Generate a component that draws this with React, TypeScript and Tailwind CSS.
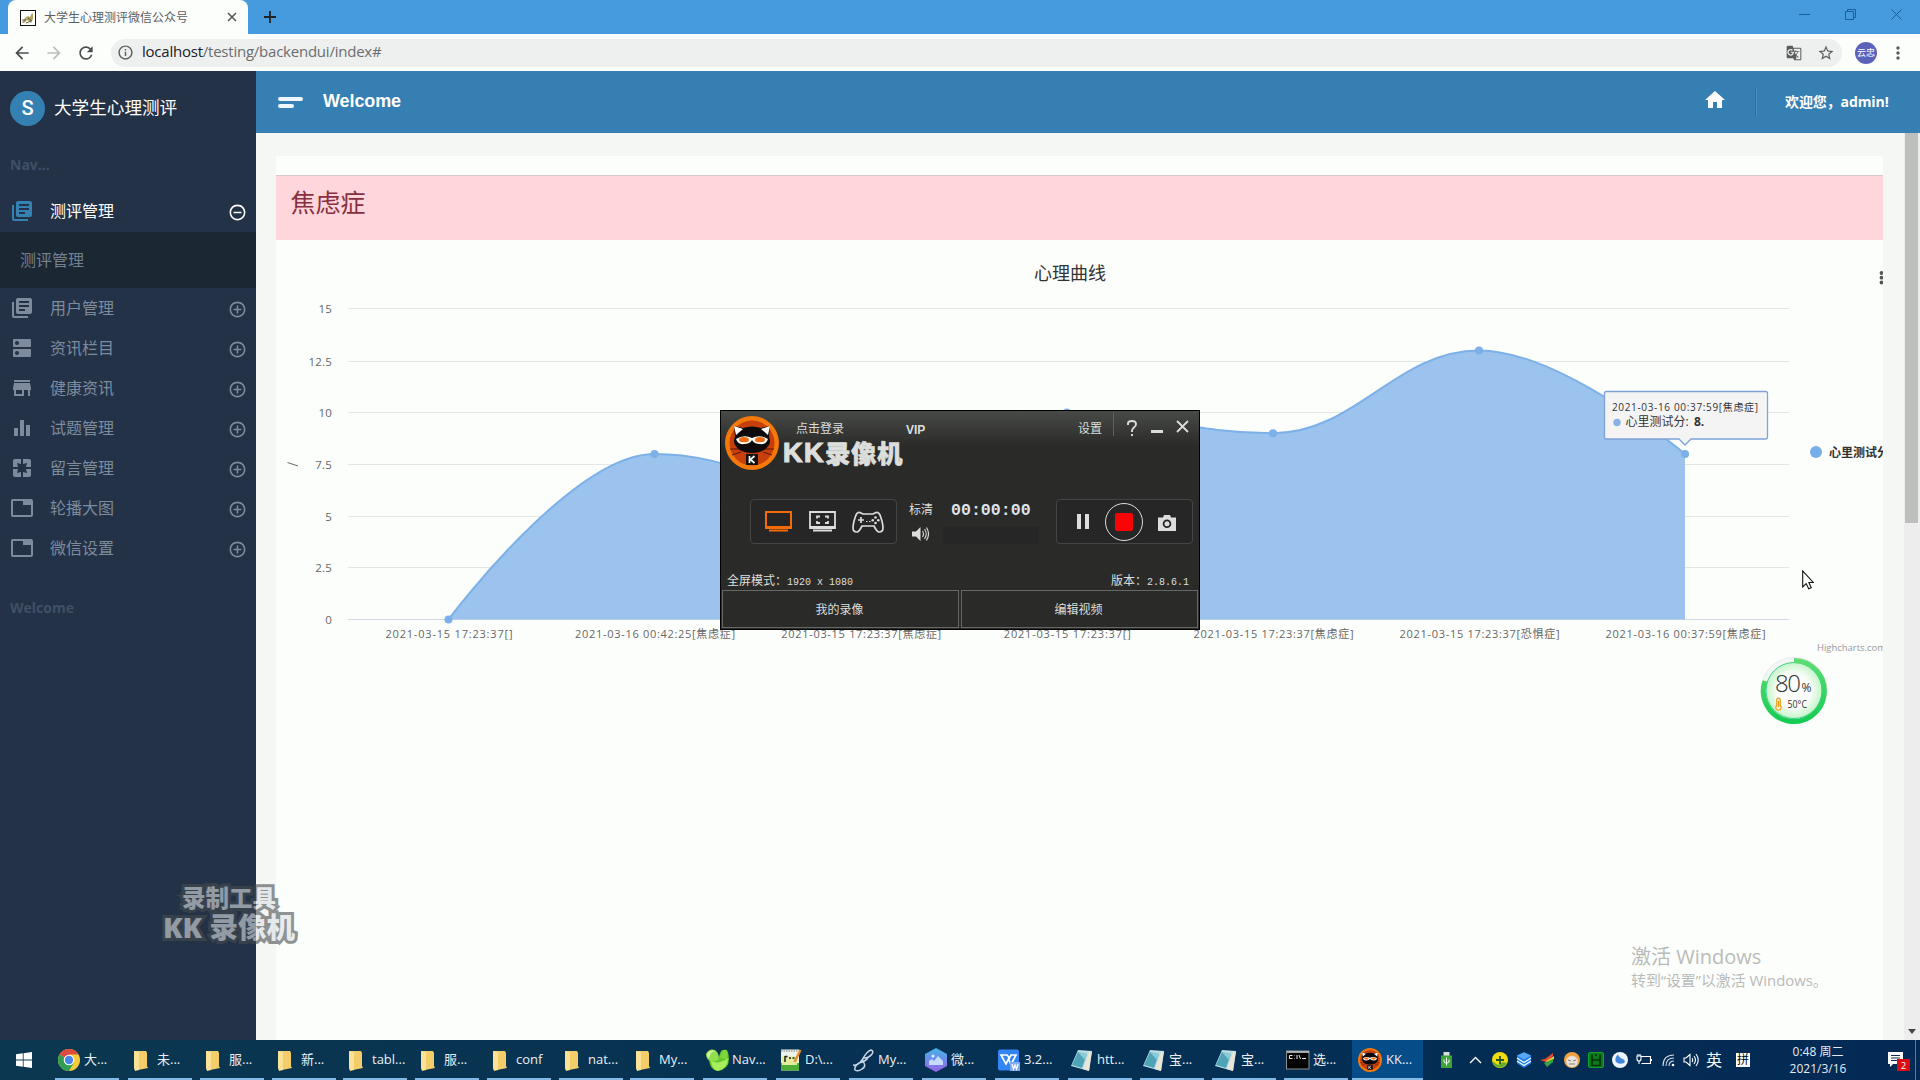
import React from "react";
import {
  MdLibraryBooks, MdDns, MdStore, MdEqualizer, MdPages, MdTab, MdHome,
  MdAddCircleOutline, MdRemoveCircleOutline, MdArrowBack, MdArrowForward,
  MdRefresh, MdInfoOutline, MdStarBorder, MdMoreVert, MdGTranslate,
} from "react-icons/md";

const SANS = "font-['Open_Sans','Noto_Sans_CJK_SC',sans-serif]";

/* ---------- Browser chrome ---------- */

function TabStrip() {
  return (
    <div className="flex h-[34px] shrink-0 items-stretch bg-[#469bdf]">
      <div className="ml-2 flex w-[240px] items-center rounded-t-lg bg-[#fcfefc] pl-3">
        <svg className="mt-px h-4 w-4" viewBox="0 0 16 16">
          <rect x="0.5" y="0.5" width="15" height="15" fill="#fff" stroke="#111" />
          <path d="M2 13 5 8 8 6 10 7 12 3 13 4 13 9 11 13 9 11 7 10 4 13z" fill="#b5a45a" />
          <path d="M2 10h4M8 8l4 3M6 13l5-2" stroke="#555" fill="none" />
        </svg>
        <span className="ml-2 mt-0.5 w-[183px] text-xs text-[#5c6065]">大学生心理测评微信公众号</span>
        <svg className="h-2.5 w-2.5" viewBox="0 0 10 10"><path d="M1 1l8 8M9 1l-8 8" stroke="#555" strokeWidth="1.6" /></svg>
      </div>
      <svg className="ml-4 mt-[11px] h-3 w-3" viewBox="0 0 12 12"><path d="M6 0v12M0 6h12" stroke="#222" strokeWidth="1.8" /></svg>
      <div className="ml-auto mr-[18px] flex items-start gap-[35px] pt-[9px] text-[#17609d]">
        <svg className="h-[11px] w-[11px]" viewBox="0 0 11 11"><path d="M0 5.5h11" stroke="currentColor" /></svg>
        <svg className="h-[11px] w-[11px]" viewBox="0 0 11 11"><path d="M.5 2.500h8v8h-8zM2.500 2.500v-2h8v8h-2" fill="none" stroke="currentColor" /></svg>
        <svg className="h-[11px] w-[11px]" viewBox="0 0 11 11"><path d="M.5.5l10 10M10.500.5l-10 10" stroke="currentColor" /></svg>
      </div>
    </div>
  );
}

function AddressBar() {
  return (
    <div className="flex h-[37px] shrink-0 items-center bg-[#fcfefc] pl-3 text-[#5a5c5e]">
      <MdArrowBack className="h-5 w-5 shrink-0 text-[#4a4c4e]" />
      <MdArrowForward className="ml-3 h-5 w-5 shrink-0 text-[#bcbebe]" />
      <MdRefresh className="ml-3 h-5 w-5 shrink-0 text-[#4a4c4e]" />
      <div className="ml-[15px] flex h-7 grow items-center rounded-full bg-[#eef0ef] pl-[6px] text-[15px]">
        <MdInfoOutline className="h-[17px] w-[17px]" />
        <span className="-mt-0.5 ml-2 tracking-[-0.23px] text-[#6b6d6f]"><span className="text-[#202124]">localhost</span>/testing/backendui/index#</span>
        <MdGTranslate className="ml-auto h-4 w-4" />
        <MdStarBorder className="ml-[15px] mr-[7px] h-[18px] w-[18px]" />
      </div>
      <div className="ml-[13px] flex h-[22px] w-[22px] shrink-0 items-center justify-center rounded-full bg-[#5c62b8] text-[9px] text-white">云忠</div>
      <MdMoreVert className="ml-[11px] mr-[12px] h-[20px] w-[20px] shrink-0" />
    </div>
  );
}

/* ---------- Sidebar ---------- */

const MENU = [
  { icon: MdLibraryBooks, label: "用户管理" },
  { icon: MdDns, label: "资讯栏目" },
  { icon: MdStore, label: "健康资讯" },
  { icon: MdEqualizer, label: "试题管理" },
  { icon: MdPages, label: "留言管理" },
  { icon: MdTab, label: "轮播大图" },
  { icon: MdTab, label: "微信设置" },
];

function Sidebar() {
  return (
    <aside className="flex w-64 shrink-0 flex-col bg-[#233247] text-base leading-none text-[#7d8b9d]">
      <div className="flex h-[76px] items-center pb-[2px] pl-[10px]">
        <div className="flex h-[35px] w-[35px] items-center justify-center rounded-full bg-[#3580b3] font-['Roboto',sans-serif] text-[20px] font-medium text-white">S</div>
        <span className="ml-[9px] text-[17.6px] text-white">大学生心理测评</span>
      </div>
      <div className="flex h-[45px] items-center pb-[10px] pl-[10px] text-sm font-bold text-[#405066]">Nav...</div>
      <div className="flex h-10 items-center pb-[2px] pl-[10px] pr-[9px] text-white">
        <MdLibraryBooks className="h-6 w-6 text-[#3681b4]" />
        <span className="ml-4">测评管理</span>
        <MdRemoveCircleOutline className="ml-auto mt-0.5 h-[19px] w-[19px]" />
      </div>
      <div className="flex h-14 items-center bg-[#1b2733] pb-px pl-5 text-[#728090]">测评管理</div>
      <div>
        {MENU.map((m) => (
          <div key={m.label} className="flex h-10 items-center pl-[10px] pr-[9px]">
            <m.icon className="h-6 w-6" />
            <span className="ml-4">{m.label}</span>
            <MdAddCircleOutline className="ml-auto mt-[3px] h-[19px] w-[19px]" />
          </div>
        ))}
      </div>
      <div className="flex h-20 items-center pl-[10px] text-sm font-bold text-[#405066]">Welcome</div>
    </aside>
  );
}

/* ---------- Chart ---------- */

const XS = [448.5, 654.5, 860.7, 1066.800, 1273, 1479, 1685];
const VALUES = [0, 8, 6, 10, 9, 13, 8];
const BASE = 619.5;
const UNIT = 20.700;
const py = (v: number) => BASE - v * UNIT;

/* Every inner point is a local extremum, so its handles are horizontal. */
function splinePath() {
  let d = `M ${XS[0]} ${py(VALUES[0])}`;
  for (let i = 0; i < XS.length - 1; i++) {
    const dx = XS[i + 1] - XS[i];
    const last = i + 1 === XS.length - 1;
    const c1x = i === 0 ? XS[0] : XS[i] + 0.4 * dx;
    const c2x = last ? XS[i + 1] : XS[i + 1] - 0.4 * dx;
    d += ` C ${c1x} ${py(VALUES[i])} ${c2x} ${py(VALUES[i + 1])} ${XS[i + 1]} ${py(VALUES[i + 1])}`;
  }
  return d;
}

const TICKS = [
  { y: 308.5, t: "15" }, { y: 361.5, t: "12.5" }, { y: 412.5, t: "10" }, { y: 464.5, t: "7.5" },
  { y: 516.5, t: "5" }, { y: 567.5, t: "2.5" }, { y: 619.5, t: "0" },
];
const CATS = [
  { t: "2021-03-15 17:23:37[]", w: 127 },
  { t: "2021-03-16 00:42:25[焦虑症]", w: 160 },
  { t: "2021-03-15 17:23:37[焦虑症]", w: 160 },
  { t: "2021-03-15 17:23:37[]", w: 127 },
  { t: "2021-03-15 17:23:37[焦虑症]", w: 160 },
  { t: "2021-03-15 17:23:37[恐惧症]", w: 160 },
  { t: "2021-03-16 00:37:59[焦虑症]", w: 160 },
];

function Chart() {
  const line = splinePath();
  return (
    <svg width="1607" height="440" viewBox="276 240 1607 440" className="block">
      <text x="1070" y="279.500" textAnchor="middle" fontSize="18" fill="#333">心理曲线</text>
      {TICKS.map((k) => (
        <g key={k.t}>
          <path d={`M348 ${k.y}H1789`} stroke={k.t === "0" ? "#d3dae4" : "#e4e6e5"} />
          <text x="332" y={k.y + 4} textAnchor="end" fontSize="11.500" letterSpacing="0.2" fill="#666">{k.t}</text>
        </g>
      ))}
      <path d="M287.500 462.500 298 466" stroke="#666" />
      <path d={`${line} L 1685 ${BASE} L ${XS[0]} ${BASE} Z`} fill="#9bc3ee" />
      <path d={line} fill="none" stroke="#7cb0e8" strokeWidth="2" />
      {XS.map((x, i) => <circle key={x} cx={x} cy={py(VALUES[i])} r="4" fill="#7cb0e8" />)}
      {CATS.map((c, i) => (
        <text key={i} x={XS[i] + 0.500 - c.w / 2} y="638" fontSize="11" textLength={c.w} fill="#666">{c.t}</text>
      ))}
      <path d="M1606.500 391.500H1765.500q2 0 2 2V437q0 2-2 2H1691l-6 6-6-6H1606.500q-2 0-2-2V393.500q0-2 2-2z" fill="#f5f4f5" stroke="#7fa3d6" strokeWidth="1.300" />
      <text x="1612" y="411" fontSize="10" textLength="146" fill="#333">2021-03-16 00:37:59[焦虑症]</text>
      <circle cx="1617" cy="422.500" r="3.700" fill="#8ab0e2" />
      <text x="1625.500" y="426" fontSize="12" fill="#333">心里测试分:</text>
      <text x="1694" y="426" fontSize="12" fill="#333" fontWeight="700">8.</text>
      <circle cx="1816" cy="452" r="6" fill="#77aee7" />
      <text x="1829" y="457" fontSize="12" fontWeight="700" fill="#333">心里测试分</text>
      <text x="1817" y="650.500" fontSize="9.500" textLength="69" fill="#999">Highcharts.com</text>
      {[273, 277.700, 282.500].map((y) => <circle key={y} cx="1881.500" cy={y} r="1.900" fill="#555" />)}
    </svg>
  );
}

function Main() {
  return (
    <div className="flex min-w-0 grow flex-col">
      <header className="flex h-[62px] shrink-0 items-center bg-[#357fb2] text-white">
        <div className="ml-[22px] flex w-[25px] flex-col gap-[3px]">
          <div className="h-1 w-[25px] rounded-sm bg-[#eef7ff]" />
          <div className="h-1 w-4 rounded-sm bg-[#eef7ff]" />
        </div>
        <h1 className="-mt-0.5 ml-[20px] font-['Liberation_Sans',sans-serif] text-lg font-bold tracking-[-0.1px]">Welcome</h1>
        <MdHome className="-mt-1 ml-auto h-6 w-6" />
        <div className="ml-[28px] h-7 w-px bg-[#2a6da0]" />
        <div className="h-7 w-px bg-[#4a92c5]" />
        <div className="ml-7 w-[135px] whitespace-nowrap text-sm font-bold tracking-[-0.1px]">欢迎您，admin!</div>
      </header>
      <div className="flex min-h-0 grow bg-[#f5f7f5]">
        <main className="ml-5 mt-[23px] w-[1607px] shrink-0 bg-[#fcfefc]">
          <div className="h-[19px]" />
          <div className="flex h-[65px] items-start border-t border-[#d9c9cf] bg-[#ffd6dc] pl-[14.5px] pt-2 text-[25px] leading-[36px] text-[#87303f]">焦虑症</div>
          <Chart />
        </main>
        <div className="ml-auto flex w-4 shrink-0 flex-col bg-[#ecedec]">
          <div className="ml-px h-[390px] w-[13px] bg-[#bdbfbd]" />
          <svg className="mb-[6px] ml-1 mt-auto h-[5px] w-2" viewBox="0 0 8 5"><path d="M0 0h8L4 5z" fill="#444" /></svg>
        </div>
      </div>
    </div>
  );
}

/* ---------- Recorder window ---------- */

function CatLogo({ className }: { className: string }) {
  return (
    <svg className={className} viewBox="0 0 54 54">
      <circle cx="27" cy="27" r="27" fill="#f5780a" />
      <circle cx="27" cy="27" r="22.500" fill="#c63f0c" />
      <path d="M5 33h10M7 39l9-3M49 33H39M47 39l-9-3" stroke="#5a1a05" />
      <path d="M9 10l9 2q9-3 18 0l9-2-1 11q2 4 0 8-5 8-17 8T10 29q-2-4 0-8z" fill="#0c0a0a" />
      <path d="M9 10l9 3-7 6zM45 10l-9 3 7 6z" fill="#fff" />
      <path d="M11 23q8-5 16-1 8-4 16 1-2 6-8 5-6 0-8-4-2 4-8 4-6 1-8-5z" fill="#fff" />
      <ellipse cx="19" cy="23.700" rx="5" ry="2.600" fill="#f06a10" />
      <ellipse cx="35" cy="23.700" rx="5" ry="2.600" fill="#f06a10" />
      <path d="M21 38h12v11H21z" fill="#111" />
      <path d="M24.500 40v7M29.500 40l-4 3.500 4 3.500" stroke="#fff" strokeWidth="1.700" fill="none" />
    </svg>
  );
}

function Recorder() {
  return (
    <div className="absolute left-[720px] top-[410px] flex h-[220px] w-[480px] flex-col border border-black bg-[#2a2b29] bg-linear-to-b from-[#484a48] from-0% to-[#2a2b29] to-[36px] text-xs leading-none text-[#dcdedc]">
      <div className="flex h-[88px] pl-1 pt-[5px]">
        <CatLogo className="h-[54px] w-[54px]" />
        <div className="ml-[4px] flex w-[160px] flex-col">
          <div className="flex pl-[13px] pt-[7px]">
            <span>点击登录</span>
            <span className="ml-[62px] mt-px font-['Liberation_Sans',sans-serif] font-bold">VIP</span>
          </div>
          <div className="mt-[4px] flex items-center whitespace-nowrap text-[25.500px] font-black leading-[26px]">
            <span className="font-['Liberation_Sans',sans-serif] text-[27px] tracking-[1.5px] [-webkit-text-stroke:1.2px_#dcdedc]">KK</span>
            <span className="tracking-[0.5px] [-webkit-text-stroke:0.6px_#dcdedc]">录像机</span>
          </div>
        </div>
        <div className="ml-auto flex h-[30px] items-start pr-[10px]">
          <span className="mt-[7px]">设置</span>
          <div className="ml-[11px] -mt-1 h-6 w-px bg-[#5f605f]" />
          <svg className="ml-[13px] mt-1 h-4 w-[10px]" viewBox="0 0 10 16"><path d="M1 5V3.500Q1 1 5 1t4 3q0 2-2 3.500T5 11v1M5 14v2" fill="none" stroke="currentColor" strokeWidth="1.900" /></svg>
          <div className="ml-[14px] mt-[14px] h-[3px] w-3 bg-[#dcdedc]" />
          <svg className="ml-[13px] mt-[4px] h-[13px] w-[13px]" viewBox="0 0 13 13"><path d="M1 1l11 11M12 1L1 12" stroke="currentColor" strokeWidth="1.800" /></svg>
        </div>
      </div>
      <div className="flex h-[45px] pl-[29px] pr-[6px]">
        <div className="flex w-[147px] items-center rounded border border-[#444645] bg-[#252625] pl-[14px]">
          <svg className="h-[21px] w-[27px]" viewBox="0 0 27 21"><path d="M1 1h25v16H1zM4 19.500h19" fill="none" stroke="#f56b08" strokeWidth="2" /><path d="M1 15h25v3H1z" fill="#f56b08" /></svg>
          <svg className="ml-[17px] h-[21px] w-[27px]" viewBox="0 0 27 21"><path d="M1 1h25v16H1zM4 19.500h19M8 7.500V5.500h3M16 5.500h3v2M8 10v2h3M16 12h3v-2" fill="none" stroke="currentColor" strokeWidth="1.800" /><path d="M1 15h25v3H1z" fill="currentColor" /></svg>
          <svg className="ml-4 h-[22px] w-8" viewBox="0 0 32 22"><path d="M9 2q-3-2-5 2Q1 12 1 17q0 4 4 4 2 0 5-6h12q3 6 5 6 4 0 4-4 0-5-3-13-2-4-5-2l-2 1H11zM9 6v6M6 9h6" fill="none" stroke="currentColor" strokeWidth="1.700" /><path d="M14 10.500h1.500M17 10.500h1.500" stroke="currentColor" /><circle cx="23.500" cy="6.500" r="1.300" fill="currentColor" /><circle cx="20.700" cy="9.300" r="1.300" fill="currentColor" /><circle cx="26.300" cy="9.300" r="1.300" fill="currentColor" /><circle cx="23.500" cy="12" r="1.300" fill="currentColor" /></svg>
        </div>
        <div className="ml-[12px] flex w-[24px] flex-col">
          <span className="mt-[5px]">标清</span>
          <svg className="ml-[3px] mt-[11px] h-[14px] w-[17px]" viewBox="0 0 17 14"><path d="M0 4.500h4L8.500 0v14L4 9.500H0z" fill="currentColor" /><path d="M10.500 4q2 3 0 6M12.500 2q3.500 5 0 10M14.500.5q4 6.500 0 13" fill="none" stroke="currentColor" strokeWidth="1.100" /></svg>
        </div>
        <div className="ml-[10px] flex w-[96px] flex-col">
          <span className="ml-2 mt-1 font-['Liberation_Mono',monospace] text-[16.600px] font-bold text-[#dbe4ee]">00:00:00</span>
          <div className="mt-[7px] h-[18px] bg-[#252625]" />
        </div>
        <div className="ml-auto flex w-[137px] items-center rounded border border-[#444645] bg-[#252625] pl-[20px]">
          <div className="flex gap-[4px]"><div className="h-[15px] w-1 bg-[#dcdedc]" /><div className="h-[15px] w-1 bg-[#dcdedc]" /></div>
          <div className="ml-4 flex h-[38px] w-[38px] items-center justify-center rounded-full border-[1.500px] border-[#dcdedc]"><div className="h-[18px] w-[18px] rounded-xs bg-[#fa0505]" /></div>
          <svg className="ml-[15px] mt-0.5 h-4 w-[18px]" viewBox="0 0 18 16"><path d="M6 0h6l1 2.500h5V16H0V2.500h5z" fill="currentColor" /><circle cx="9" cy="8.700" r="3.400" fill="none" stroke="#252625" strokeWidth="1.800" /></svg>
        </div>
      </div>
      <div className="flex h-[46px] items-end justify-between pb-[2px] pl-[6px] pr-[10px]">
        <span>全屏模式：<span className="font-['Liberation_Mono',monospace] text-[10px]">1920 x 1080</span></span>
        <span>版本：<span className="font-['Liberation_Mono',monospace] text-[10px]">2.8.6.1</span></span>
      </div>
      <div className="flex grow gap-[2px] px-px pb-px">
        <div className="flex w-1/2 items-center justify-center border border-[#666866] pr-0.5 pt-0.5">我的录像</div>
        <div className="flex w-1/2 items-center justify-center border border-[#666866] pr-0.5 pt-0.5">编辑视频</div>
      </div>
    </div>
  );
}

/* ---------- Desktop overlays ---------- */

function Overlays() {
  return (
    <>
      <Recorder />
      <div className="absolute left-[163px] top-[884px] flex w-[132px] flex-col items-center whitespace-nowrap font-black text-[#dcdfe3] opacity-60 [-webkit-text-stroke:6px_#454b4e] [paint-order:stroke_fill]">
        <div className="text-[23.500px] leading-[28px]">录制工具</div>
        <div className="text-[28.500px] leading-[30px]">KK 录像机</div>
      </div>
      <div className="absolute left-[1631px] top-[942px] flex flex-col whitespace-nowrap text-[#b9bbb9]">
        <span className="text-[20px] leading-[30px]">激活 Windows</span>
        <span className="-mt-0.5 text-[14.900px] leading-[20px]">转到“设置”以激活 Windows。</span>
      </div>
      <svg className="absolute left-[1760px] top-[656px]" width="69" height="69" viewBox="0 0 69 69">
        <defs>
          <radialGradient id="ball"><stop offset="0.600" stopColor="#fafdfa" /><stop offset="1" stopColor="#c4f5c8" /></radialGradient>
          <linearGradient id="ring" x1="0" y1="0" x2="0" y2="1"><stop offset="0" stopColor="#5fdc74" /><stop offset="1" stopColor="#14cc52" /></linearGradient>
        </defs>
        <circle cx="34" cy="34.500" r="33" fill="#f2f6f4" stroke="#dfe5e2" strokeWidth="0.800" />
        <circle cx="34" cy="34.500" r="28" fill="url(#ball)" stroke="#3ccf8a" />
        <path d="M34 4.500A30.500 30.500 0 1 1 5 25" fill="none" stroke="url(#ring)" strokeWidth="5" />
        <text x="15" y="36" fontSize="24" fontWeight="300" textLength="26" fill="#333">80</text>
        <text x="41.500" y="36" fontSize="12" textLength="10" lengthAdjust="spacingAndGlyphs" fill="#333">%</text>
        <path d="M16.700 49.500v-5.500a1.800 1.800 0 0 1 3.600 0v5.500a2.700 2.700 0 1 1-3.600 0z" fill="#fdf0d0" stroke="#f0a020" strokeWidth="1.200" />
        <path d="M18.500 45v6" stroke="#f0a020" strokeWidth="1.500" />
        <text x="27.500" y="52" fontSize="10" textLength="19.500" lengthAdjust="spacingAndGlyphs" fill="#333">50°C</text>
      </svg>
      <svg className="absolute left-[1802px] top-[570px]" width="12" height="20" viewBox="0 0 12 20">
        <path d="M.7.9v16.100l3.500-3.400 2.500 5.200 2.500-1.100-2.300-5.200h4.400z" fill="#fff" stroke="#111" strokeWidth="1.100" />
      </svg>
    </>
  );
}

/* ---------- Taskbar ---------- */

const FolderIcon = () => (
  <svg className="h-6 w-6" viewBox="0 0 24 24">
    <path d="M4 3h12l1 2v13l1 2-10 2-4-2z" fill="#f4cd6b" />
    <path d="M4 3l5 1v18l-4 1-1-3z" fill="#fbe296" />
  </svg>
);
const ChromeIcon = () => (
  <svg className="h-6 w-6" viewBox="0 0 24 24">
    <circle cx="12" cy="12" r="11" fill="#f7cb3c" />
    <path d="M12 12L2.500 6.500A11 11 0 0 1 21.500 6.500H12z" fill="#dd4b3e" />
    <path d="M12 12L2.500 6.500A11 11 0 0 0 12 23l5-8.500z" fill="#2f9e52" />
    <circle cx="12" cy="12" r="5.300" fill="#fff" /><circle cx="12" cy="12" r="4.200" fill="#4a86e8" />
  </svg>
);
const NavicatIcon = () => (
  <svg className="h-6 w-6" viewBox="0 0 24 24">
    <path d="M4 10Q4 22 13 23q11-2 11-12 0-5-2-9-3-1-6 1l-3 8z" fill="#62c92b" />
    <path d="M6 13q8 4 17-3 0 10-10 13-6-1-7-10z" fill="#a9ee5a" />
    <path d="M1 6q3-6 9-4 4 3 4 9-5 4-9 2Q1 11 1 6z" fill="#8fe04c" />
    <path d="M2 6q3-5 8-3-5 1-6 7-2-1-2-4z" fill="#d4f7a4" />
    <path d="M15 10l2-7q3-2 5 0 1 4 0 8z" fill="#7dd63a" />
  </svg>
);
const NotepadPlusIcon = () => (
  <svg className="h-6 w-6" viewBox="0 0 24 24">
    <path d="M3 1.500h18v21H3z" fill="#eef3ea" /><path d="M3 15h18v7.500H3z" fill="#4caf3a" /><path d="M4 8.500h15V17H4z" fill="#e2eda0" />
    <path d="M3 3h17" stroke="#777" strokeDasharray="1.500 1" /><path d="M7 8v6M7 8.500h2.500M11 10h2M14.500 10h2" stroke="#222" strokeWidth="1.500" />
    <path d="M22.500 2L16.500 14" stroke="#e88c28" strokeWidth="2.400" />
  </svg>
);
const SwirlIcon = () => (
  <svg className="h-6 w-6" viewBox="0 0 24 24">
    <path d="M2 17q5 1 9-5 5-9 9-10 3 1 1 4-3 4-8 4-3 2 0 5 2 4-2 6-4 3-7 1-1-4 4-7 7-2 9-5" fill="none" stroke="#c6d4e6" strokeWidth="1.500" />
  </svg>
);
const HexIcon = () => (
  <svg className="h-6 w-6" viewBox="0 0 24 24">
    <defs><linearGradient id="hex" x1="0" y1="0" x2="0" y2="1"><stop offset="0" stopColor="#44b4e8" /><stop offset="1" stopColor="#9a62e8" /></linearGradient></defs>
    <path d="M12 0l11 6v12l-11 6-11-6V6z" fill="url(#hex)" />
    <path d="M5 17v-4l3-2 2 2 4-5 5 5v4z" fill="#c5dcfa" /><circle cx="9" cy="8" r="1.500" fill="#e6f2ff" />
  </svg>
);
const WpsIcon = () => (
  <svg className="h-6 w-6" viewBox="0 0 24 24">
    <rect x="1" y="1.500" width="21" height="21" rx="2" fill="#3384f4" />
    <path d="M4 7h6l2.500 3L14 7h5l-5 9.500L11.500 11 9 16z" fill="none" stroke="#fff" strokeWidth="1.700" />
    <rect x="13" y="14" width="10" height="9" fill="#7baaf0" /><path d="M15 16l1.500 5 1.500-4 1.500 4 1.500-5" fill="none" stroke="#fff" strokeWidth="1.200" />
  </svg>
);
const NotepadIcon = () => (
  <svg className="h-6 w-6" viewBox="0 0 24 24">
    <path d="M8 2l14 1-3 20L1 18z" fill="#b9dfe4" /><path d="M8 4l9 2-5 14-10-3z" fill="#4fa4b8" />
    <path d="M8 4l9 2-2 6z" fill="#8ccbd6" /><path d="M19 23l3-20-3 1-6 17z" fill="#e9e6d6" />
  </svg>
);
const CmdIcon = () => (
  <svg className="h-6 w-6" viewBox="0 0 24 24">
    <rect x="0.500" y="3" width="22.500" height="18" fill="#050505" stroke="#8b8f92" /><path d="M1 4h22" stroke="#d5d8da" strokeWidth="1.500" />
    <path d="M6.500 7.500h-3v3h3M8.500 7.500v.5M8.500 10v.5M11 7v4M13 7l1.500 4M16 10.500h4" stroke="#e8e8e8" fill="none" />
  </svg>
);
const KKIcon = () => <CatLogo className="h-6 w-6" />;

const TASKS = [
  { icon: ChromeIcon, t: "大...", w: "w-[73px]" },
  { icon: FolderIcon, t: "未...", w: "w-[72px]" },
  { icon: FolderIcon, t: "服...", w: "w-[72px]" },
  { icon: FolderIcon, t: "新...", w: "w-[71px]" },
  { icon: FolderIcon, t: "tabl...", w: "w-[72px]" },
  { icon: FolderIcon, t: "服...", w: "w-[72px]" },
  { icon: FolderIcon, t: "conf", w: "w-[72px]" },
  { icon: FolderIcon, t: "nat...", w: "w-[71px]" },
  { icon: FolderIcon, t: "My...", w: "w-[73px]" },
  { icon: NavicatIcon, t: "Nav...", w: "w-[73px]" },
  { icon: NotepadPlusIcon, t: "D:\\...", w: "w-[73px]" },
  { icon: SwirlIcon, t: "My...", w: "w-[73px]" },
  { icon: HexIcon, t: "微...", w: "w-[73px]" },
  { icon: WpsIcon, t: "3.2...", w: "w-[73px]" },
  { icon: NotepadIcon, t: "htt...", w: "w-[72px]" },
  { icon: NotepadIcon, t: "宝...", w: "w-[72px]" },
  { icon: NotepadIcon, t: "宝...", w: "w-[72px]" },
  { icon: CmdIcon, t: "选...", w: "w-[68px]" },
];

function Tray() {
  return (
    <div className="ml-auto flex h-10 items-center">
      <svg className="h-4 w-[11px]" viewBox="0 0 11 16"><path d="M2.500 0h6v4h-6z" fill="#ddd" /><path d="M0 3.500h11V16H0z" fill="#3ba536" /><path d="M5.500 5.500v8M3 7.500v2.500l2.500 1.500L8 10V7.500" stroke="#fff" fill="none" /></svg>
      <svg className="ml-[17px] h-2 w-[13px]" viewBox="0 0 13 8"><path d="M1 7l5.500-5.500L12 7" fill="none" stroke="#fff" strokeWidth="1.400" /></svg>
      <div className="ml-[10px] flex gap-2">
        <svg className="h-4 w-4" viewBox="0 0 16 16"><circle cx="8" cy="8" r="8" fill="#f0dc10" /><path d="M0 9a8 8 0 0 0 15 2l-4-1-5 3z" fill="#5fae30" /><path d="M8 4v8M4 8h8" stroke="#23551e" strokeWidth="1.800" /></svg>
        <svg className="h-4 w-4" viewBox="0 0 16 16"><path d="M8 0l7 3.500v8L8 16l-7-4.500v-8z" fill="#1f7bea" /><path d="M8 .5l7 3-7 4-7-4z" fill="#58a7f5" /><path d="M1 6l7 4.500L15 6M1 9l7 4.500L15 9" stroke="#f4faff" fill="none" strokeWidth="1.300" /></svg>
        <svg className="h-4 w-4" viewBox="0 0 16 16"><path d="M0 8l5-1 8-6v3L6 10z" fill="#e54b2c" /><path d="M6 9l8-5v3l-7 5z" fill="#f3c52e" /><path d="M4 11l9-4v3l-6 5z" fill="#33a04a" /></svg>
        <svg className="h-4 w-4" viewBox="0 0 16 16"><circle cx="8" cy="8" r="8" fill="#eba341" /><circle cx="8" cy="9.500" r="5.800" fill="#e8e2da" /><path d="M4 8l3 1M12 8l-3 1M5 12h6" stroke="#8b7f74" /></svg>
        <svg className="h-4 w-4" viewBox="0 0 16 16"><rect x="0.500" y="0.500" width="15" height="15" rx="1.500" fill="#0c7a1c" stroke="#12a02a" /><path d="M4 2.500v11h8v-11M4.500 8h7M7 3h2" stroke="#04300a" strokeWidth="1.600" fill="none" /></svg>
        <svg className="h-4 w-4" viewBox="0 0 16 16"><circle cx="8" cy="8" r="8" fill="#eef4fb" /><path d="M6 2.500q1 3 5 4.500 3 2 1 4-5 2-8-1-2-4 2-7.500z" fill="#4386dc" /></svg>
        <svg className="h-4 w-4" viewBox="0 0 16 16"><path d="M5.500 4.500h9v7h-9M15.500 7v2M1 4h4v3q0 2-2 2T1 7zM2 2v2M4 2v2M3 9v3" fill="none" stroke="#fff" strokeWidth="1.100" /></svg>
      </div>
      <svg className="ml-[10px] h-[13px] w-[13px]" viewBox="0 0 13 13"><path d="M1 12Q1 1 12 1M4 12Q4 4 12 4M7 12Q7 7 12 7" fill="none" stroke="#cfdbe6" strokeWidth="1.100" /><circle cx="11" cy="11" r="1.300" fill="#fff" /></svg>
      <svg className="ml-2 h-[14px] w-4" viewBox="0 0 16 14"><path d="M1 5h2l4-3.500v11L3 9H1zM9 5q1.500 2 0 4M11 3q3 4 0 8M13 1q4.500 6 0 12" fill="none" stroke="#fff" strokeWidth="1.100" /></svg>
      <span className="ml-[7px] text-[16px] leading-none text-white">英</span>
      <span className="ml-[14px] flex h-[14px] w-[14px] items-center justify-center bg-white text-[12px] leading-none text-black">拼</span>
      <div className="ml-[36px] flex w-[64px] flex-col items-center whitespace-nowrap pb-px text-xs leading-[17px] text-[#e3ebf2]">
        <span>0:48 周二</span>
        <span>2021/3/16</span>
      </div>
      <svg className="ml-[37px] h-6 w-6" viewBox="0 0 24 24">
        <path d="M1 4h15v12H6l-3 3v-3H1z" fill="#fff" /><path d="M4 7.500h9M4 10h9M4 12.500h6" stroke="#0a2c50" />
        <rect x="10" y="11" width="13" height="12" fill="#d90d12" />
        <text x="16.500" y="20.500" fontSize="9.500" textAnchor="middle" fill="#fff">2</text>
      </svg>
      <div className="ml-[4px] mr-1 h-10 w-px bg-[#5f7a98]" />
    </div>
  );
}

function Taskbar() {
  return (
    <div className="flex h-10 shrink-0 items-stretch bg-linear-to-r from-[#0b3750] to-[#032a55] text-[13px] text-[#e8f0f6]">
      <div className="flex w-[55px] items-center pl-4">
        <svg className="h-4 w-4" viewBox="0 0 16 16"><path d="M0 2.300l6.800-1v6.300H0zM7.600 1.200L16 0v7.600H7.600zM0 8.400h6.800v6.300l-6.800-1zM7.600 8.400H16V16l-8.400-1.200z" fill="#fff" /></svg>
      </div>
      {TASKS.map((k, i) => (
        <div key={i} className={`${k.w} shrink-0`}>
          <div className="flex h-10 w-16 items-center whitespace-nowrap border-b-2 border-[#83b9e6] pl-0.5 pt-px">
            <k.icon />
            <span className="ml-[3px]">{k.t}</span>
          </div>
        </div>
      ))}
      <div className="flex w-[71px] shrink-0 items-center border-b-2 border-[#83b9e6] bg-[#064c89] pl-[6px] pt-px">
        <KKIcon />
        <span className="ml-1">KK...</span>
      </div>
      <Tray />
    </div>
  );
}

export default function App() {
  return (
    <div className={`relative flex h-[1080px] w-[1920px] flex-col overflow-hidden bg-[#fcfefc] ${SANS}`}>
      <TabStrip />
      <AddressBar />
      <div className="flex min-h-0 grow">
        <Sidebar />
        <Main />
      </div>
      <Taskbar />
      <Overlays />
    </div>
  );
}
